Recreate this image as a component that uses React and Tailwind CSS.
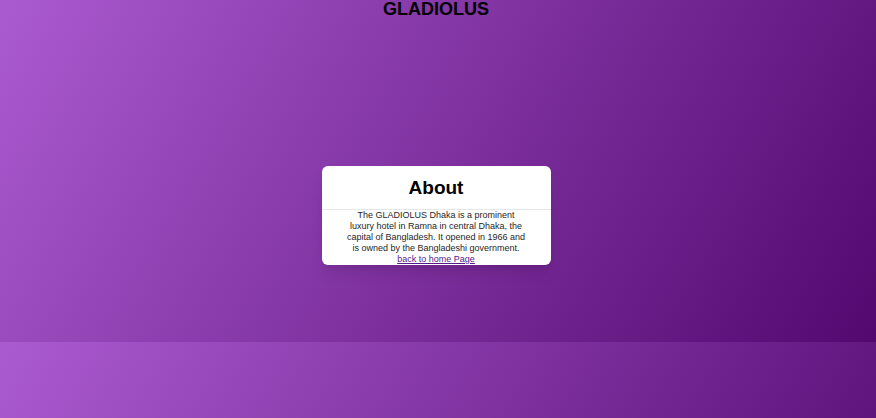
export default function App() {
  return (
    <div className="min-h-screen bg-[linear-gradient(120deg,#ab5bd0,#52086f)] bg-[length:100%_342px] bg-repeat-y font-['Liberation_Sans',Arial,sans-serif] text-black">
      <h1 className="pr-1 text-center text-lg leading-[18px] font-bold">GLADIOLUS</h1>
      <main className="mx-auto pt-[148px] pr-1">
        <section className="mx-auto w-[229px] rounded-md bg-white text-center shadow-lg">
          <h2 className="border-b border-gray-200 pt-2 pb-2 text-[19px] leading-[27px] font-bold">About</h2>
          <p className="mx-auto w-[182px] text-[9px] leading-[11px] text-neutral-800">
            The GLADIOLUS Dhaka is a prominent luxury hotel in Ramna in central Dhaka, the capital of Bangladesh. It opened in 1966 and is owned by the Bangladeshi government.
            <br />
            <a href="#home" className="text-[#551a8b] underline">back to home Page</a>
          </p>
        </section>
      </main>
    </div>
  );
}
